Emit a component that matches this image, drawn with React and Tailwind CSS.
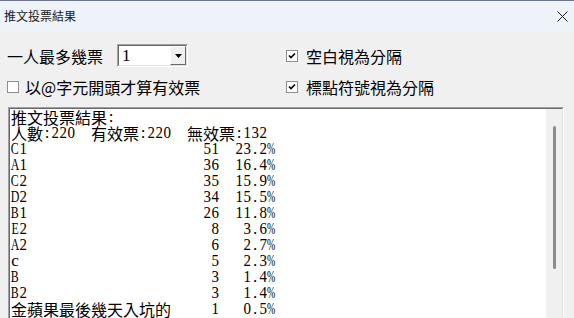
import React from "react";

const cjk = "font-['Noto_Sans_CJK_TC',sans-serif]";

const rows = [
  ["C1", 51, "23.2%"],
  ["A1", 36, "16.4%"],
  ["C2", 35, "15.9%"],
  ["D2", 34, "15.5%"],
  ["B1", 26, "11.8%"],
  ["E2", 8, "3.6%"],
  ["A2", 6, "2.7%"],
  ["c", 5, "2.3%"],
  ["B", 3, "1.4%"],
  ["B2", 3, "1.4%"],
  ["金蘋果最後幾天入坑的", 1, "0.5%"],
];

// half-width chars take one 8px cell, CJK take two
const cells = (s) => [...s].reduce((w, c) => w + (c.charCodeAt(0) > 0x7f ? 2 : 1), 0);
const padR = (s, n) => s + " ".repeat(Math.max(0, n - cells(s)));
const padL = (s, n) => " ".repeat(Math.max(0, n - cells(s))) + s;

// squeeze the wide Times glyphs into the 8px cell
const squeeze = (c) => {
  if (c === "%") return "scale-x-[0.58]";
  if (/[A-Z]/.test(c)) return "scale-x-[0.7]";
  if (/[0-9]/.test(c)) return "scale-x-[0.88]";
  return "";
};

const Line = ({ text }) => (
  <div className="h-[16px] flex whitespace-pre">
    {[...text].map((c, i) =>
      c.charCodeAt(0) > 0x7f ? (
        <span key={i} className={`w-[16px] text-center ${cjk} text-[16px]`}>{c}</span>
      ) : (
        <span key={i} className="w-[8px] flex justify-center font-['Liberation_Serif',serif] text-[17px]">
          <span className={`inline-block ${squeeze(c)}`}>{c}</span>
        </span>
      )
    )}
  </div>
);

const Check = ({ checked }) => (
  <div className="w-[12px] h-[12px] border border-[#8f8f8f] bg-white flex items-center justify-center shrink-0">
    {checked && (
      <svg width="8" height="8" viewBox="0 0 8 8">
        <path d="M1 3.5 L3 5.5 L7 1.5" stroke="#000" strokeWidth="1.6" fill="none" />
      </svg>
    )}
  </div>
);

export default function App() {
  const lines = [
    "推文投票結果:",
    "人數:220  有效票:220  無效票:132",
    ...rows.map(([name, n, pct]) => padR(name, 24) + padL(String(n), 2) + padL(pct, 7)),
  ];

  return (
    <div className={`w-[574px] h-[318px] bg-[#f0f0f0] overflow-hidden flex flex-col ${cjk}`}>
      <div className="h-px shrink-0 bg-[#6b7794]" />
      <div className="h-[30px] shrink-0 bg-[#eef2f9] flex items-center justify-between pl-[4px] pr-[6px]">
        <span className="text-[12px] text-[#1a1a1a] leading-none">推文投票結果</span>
        <svg width="11" height="11" viewBox="0 0 11 11">
          <path d="M0.5 0.5 L10.5 10.5 M10.5 0.5 L0.5 10.5" stroke="#1a1a1a" strokeWidth="1" />
        </svg>
      </div>

      <div className="shrink-0 grid grid-cols-[279px_1fr] pl-[7px] pt-[13px] gap-y-[12px] text-[16px] text-black leading-[16px]">
        <div className="flex items-center h-[23px]">
          <span>一人最多幾票</span>
          <div className="ml-[14px] w-[71px] h-[23px] border-t border-l border-[#a0a0a0] border-r border-b border-r-white border-b-white">
            <div className="h-full border-t border-l border-[#696969] border-r border-b border-r-[#e3e3e3] border-b-[#e3e3e3] bg-white flex items-center justify-between">
              <span className="pl-[3px] font-['Liberation_Serif',serif] text-[17px]">1</span>
              <div className="w-[16px] h-full bg-[#f0f0f0] border-t border-l border-white border-r border-b border-r-[#696969] border-b-[#696969] flex items-center justify-center">
                <svg width="7" height="4" viewBox="0 0 7 4">
                  <path d="M0 0 H7 L3.5 4 Z" fill="#000" />
                </svg>
              </div>
            </div>
          </div>
        </div>
        <div className="flex items-center h-[23px]">
          <Check checked />
          <span className="ml-[8px]">空白視為分隔</span>
        </div>
        <div className="flex items-center h-[16px]">
          <Check />
          <span className="ml-[6px]">以@字元開頭才算有效票</span>
        </div>
        <div className="flex items-center h-[16px]">
          <Check checked />
          <span className="ml-[8px]">標點符號視為分隔</span>
        </div>
      </div>

      <div className="mt-[12px] ml-[8px] w-[556px] flex-1 min-h-0 border-t border-l border-[#a0a0a0] border-r border-r-white">
        <div className="h-full border-t border-l border-[#696969] border-r border-r-[#e3e3e3] bg-white flex overflow-hidden">
          <div className="flex-1 pl-[1px] leading-[16px] text-black">
            {lines.map((t, i) => (
              <Line key={i} text={t} />
            ))}
          </div>
          <div className="w-[16px] shrink-0 bg-[#f0f0f0] flex justify-center pt-[17px]">
            <div className="w-[3px] h-[143px] rounded-full bg-[#8b8b8b] ml-[1px]" />
          </div>
        </div>
      </div>
    </div>
  );
}
